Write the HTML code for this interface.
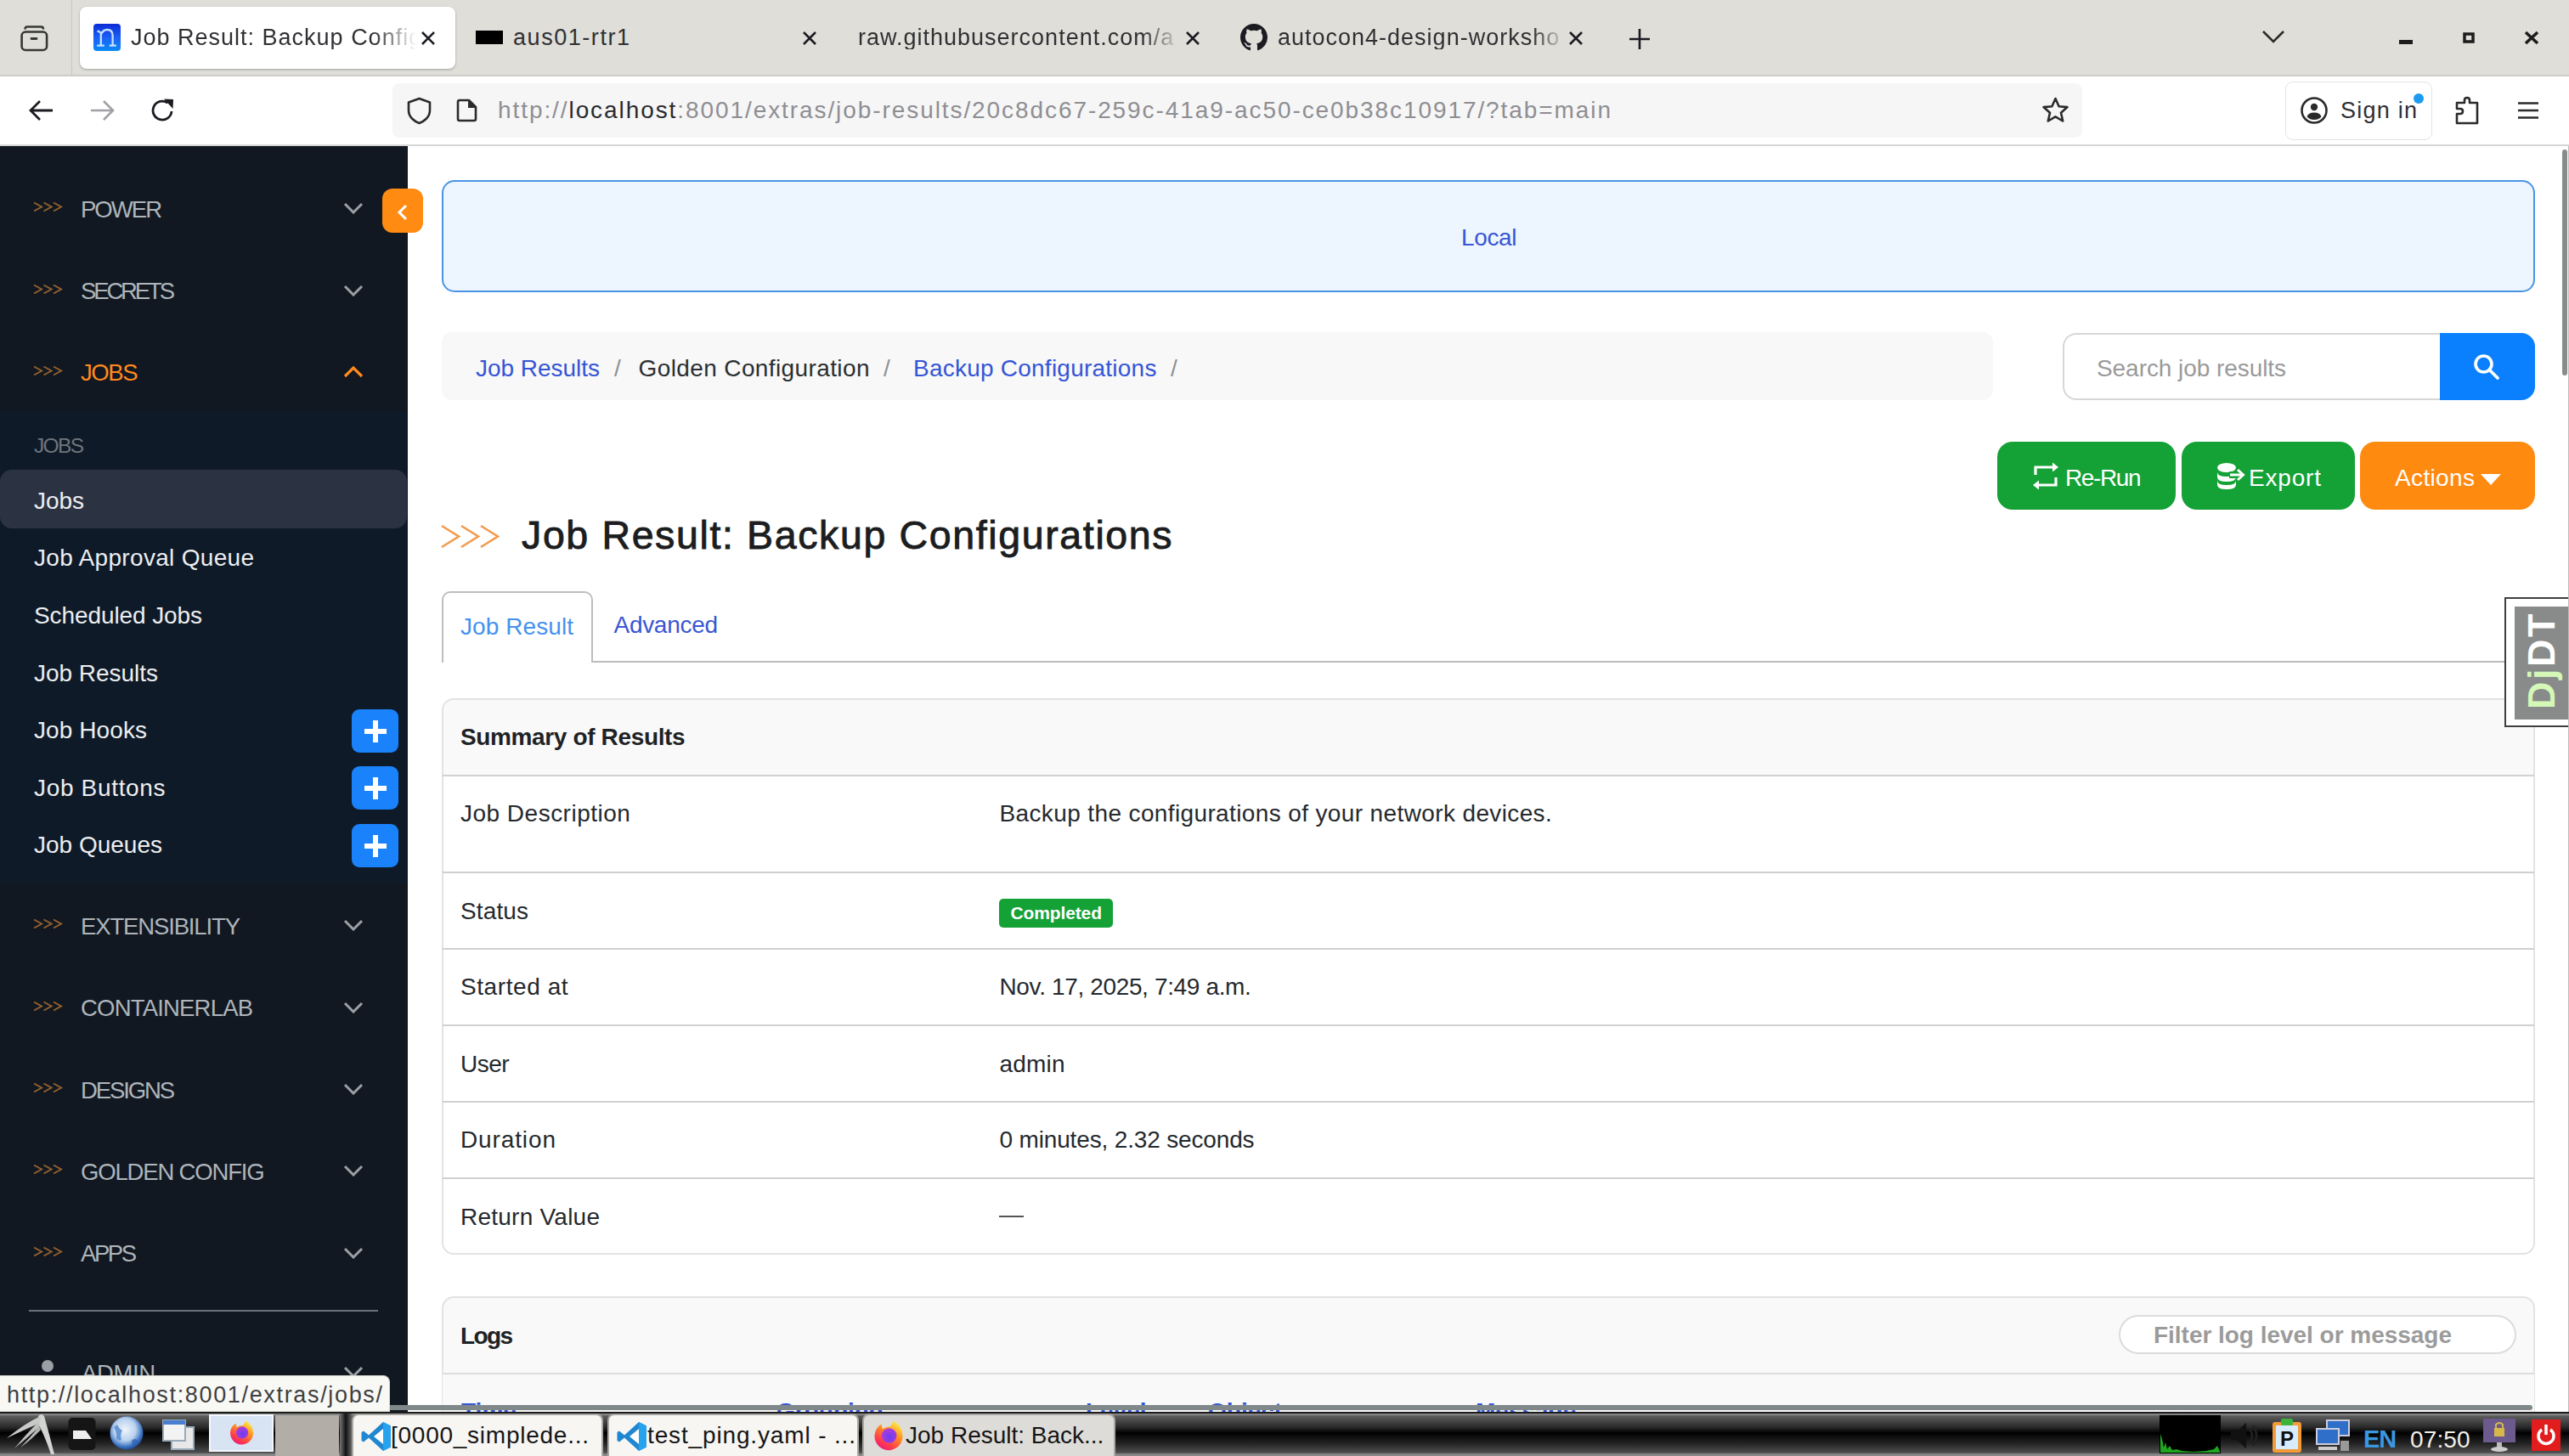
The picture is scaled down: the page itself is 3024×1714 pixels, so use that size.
<!DOCTYPE html><html><head><meta charset="utf-8"><style>
html,body{margin:0;padding:0;width:3024px;height:1714px;overflow:hidden;background:#fff;font-family:"Liberation Sans",sans-serif;}
.r{position:absolute;display:block;}
.t{position:absolute;line-height:1;white-space:nowrap;}
</style></head><body>
<div class="r" style="left:480px;top:172px;width:2544px;height:1490px;background:#fff;"></div>
<div class="r" style="left:520px;top:212px;width:2464px;height:132px;background:#edf5fe;border:2px solid #4a94e8;border-radius:15px;box-sizing:border-box;"></div>
<div class="t " style="left:1720px;top:266.30px;font-size:28px;color:#3a56d4;letter-spacing:-0.384px;">Local</div>
<div class="r" style="left:520px;top:391px;width:1826px;height:80px;background:#f7f8f7;border-radius:12px;"></div>
<div class="t " style="left:560px;top:420.30px;font-size:28px;color:#3555d6;letter-spacing:-0.030px;">Job Results</div>
<div class="t " style="left:723px;top:420.30px;font-size:28px;color:#8d9196;">/</div>
<div class="t " style="left:751.5px;top:420.30px;font-size:28px;color:#2b2f33;letter-spacing:0.388px;">Golden Configuration</div>
<div class="t " style="left:1040px;top:420.30px;font-size:28px;color:#8d9196;">/</div>
<div class="t " style="left:1075px;top:420.30px;font-size:28px;color:#3555d6;letter-spacing:0.233px;">Backup Configurations</div>
<div class="t " style="left:1378px;top:420.30px;font-size:28px;color:#8d9196;">/</div>
<div class="r" style="left:2428px;top:392px;width:456px;height:79px;background:#fff;border:2px solid #d7d7d7;border-right:none;border-radius:16px 0 0 16px;box-sizing:border-box;"></div>
<div class="t " style="left:2468px;top:420.30px;font-size:28px;color:#9a9a9a;letter-spacing:-0.065px;">Search job results</div>
<div class="r" style="left:2872px;top:392px;width:112px;height:79px;background:#0a80ff;border-radius:0 16px 16px 0;"></div>
<svg class="r" style="left:2910px;top:415px;" width="36" height="36" viewBox="0 0 36 36"><circle cx="13.5" cy="13.5" r="9.5" fill="none" stroke="#fff" stroke-width="3.6"/><path d="M20.5 20.5L30 30" stroke="#fff" stroke-width="3.8" stroke-linecap="round"/></svg>
<div class="r" style="left:2351px;top:520px;width:210px;height:80px;background:#14a135;border-radius:18px;"></div>
<svg class="r" style="left:2392px;top:544px;" width="32" height="33" viewBox="0 0 32 33"><path d="M4 15V6H25M28 18V27H7" fill="none" stroke="#fff" stroke-width="3.2"/><path d="M24 0.5L31 6L24 11.5Z" fill="#fff"/><path d="M8 21.5L1 27L8 32.5Z" fill="#fff"/></svg>
<div class="t " style="left:2431px;top:548.80px;font-size:28px;color:#fff;letter-spacing:-1.397px;">Re-Run</div>
<div class="r" style="left:2568px;top:520px;width:204px;height:80px;background:#14a135;border-radius:18px;"></div>
<svg class="r" style="left:2609px;top:544px;" width="36" height="33" viewBox="0 0 36 33"><ellipse cx="12" cy="6.5" rx="11" ry="5.5" fill="#fff"/><path d="M1 11.5Q1 17 12 17Q23 17 23 11.5V17.5Q23 23 12 23Q1 23 1 17.5Z" fill="#fff"/><path d="M1 21.5Q1 27 12 27Q23 27 23 21.5V26.5Q23 32 12 32Q1 32 1 26.5Z" fill="#fff"/><path d="M15 15H29" stroke="#14a135" stroke-width="8"/><path d="M24 7L33 15L24 23" fill="none" stroke="#14a135" stroke-width="6"/><path d="M16 15H30" stroke="#fff" stroke-width="3"/><path d="M25 9L31.5 15L25 21" fill="none" stroke="#fff" stroke-width="3"/></svg>
<div class="t " style="left:2647px;top:548.80px;font-size:28px;color:#fff;letter-spacing:0.812px;">Export</div>
<div class="r" style="left:2778px;top:520px;width:206px;height:80px;background:#ff8a10;border-radius:18px;"></div>
<div class="t " style="left:2819px;top:548.80px;font-size:28px;color:#fff;letter-spacing:0.362px;">Actions</div>
<svg class="r" style="left:2919px;top:556px;" width="26" height="16" viewBox="0 0 26 16"><path d="M1 2H25L13 15Z" fill="#fff"/></svg>
<svg class="r" style="left:518px;top:616px;" width="72" height="32" viewBox="0 0 72 32"><path d="M2 3L22 15.5L2 28M25 3L45 15.5L25 28M48 3L68 15.5L48 28" fill="none" stroke="#f39a4c" stroke-width="2.6"/></svg>
<div class="t " style="left:614px;top:607.14px;font-size:46.5px;color:#1b1d20;letter-spacing:1.631px;-webkit-text-stroke:0.9px #1b1d20;">Job Result: Backup Configurations</div>
<div class="r" style="left:520px;top:778px;width:2464px;height:2px;background:#bcbcbc;"></div>
<div class="r" style="left:520px;top:696px;width:178px;height:84px;background:#fff;border:2px solid #bdbdbd;border-bottom:none;border-radius:10px 10px 0 0;box-sizing:border-box;"></div>
<div class="t " style="left:542px;top:724.30px;font-size:28px;color:#4592ee;letter-spacing:0.078px;">Job Result</div>
<div class="t " style="left:722.5px;top:721.80px;font-size:28px;color:#3a56d4;letter-spacing:-0.292px;">Advanced</div>
<div class="r" style="left:520px;top:822px;width:2464px;height:655px;background:#fff;border:2px solid #e2e3e3;border-radius:14px;box-sizing:border-box;overflow:hidden;"><div style="position:absolute;left:0;top:0;right:0;height:90px;background:#f8f9f8"></div></div>
<div class="r" style="left:521px;top:912px;width:2462px;height:2px;background:#d0d1d2;"></div>
<div class="t " style="left:542px;top:854.30px;font-size:28px;color:#1f2225;font-weight:700;letter-spacing:-0.362px;">Summary of Results</div>
<div class="t " style="left:542px;top:943.80px;font-size:28px;color:#25292d;letter-spacing:0.487px;">Job Description</div>
<div class="r" style="left:521px;top:1026px;width:2462px;height:2px;background:#cfd0d1;"></div>
<div class="t " style="left:542px;top:1058.80px;font-size:28px;color:#25292d;letter-spacing:0.122px;">Status</div>
<div class="r" style="left:521px;top:1116px;width:2462px;height:2px;background:#cfd0d1;"></div>
<div class="t " style="left:542px;top:1147.80px;font-size:28px;color:#25292d;letter-spacing:0.577px;">Started at</div>
<div class="r" style="left:521px;top:1206px;width:2462px;height:2px;background:#cfd0d1;"></div>
<div class="t " style="left:542px;top:1238.80px;font-size:28px;color:#25292d;letter-spacing:-0.508px;">User</div>
<div class="r" style="left:521px;top:1296px;width:2462px;height:2px;background:#cfd0d1;"></div>
<div class="t " style="left:542px;top:1328.30px;font-size:28px;color:#25292d;letter-spacing:0.879px;">Duration</div>
<div class="r" style="left:521px;top:1386px;width:2462px;height:2px;background:#cfd0d1;"></div>
<div class="t " style="left:542px;top:1418.80px;font-size:28px;color:#25292d;letter-spacing:0.240px;">Return Value</div>
<div class="t " style="left:1176.5px;top:943.80px;font-size:28px;color:#25292d;letter-spacing:0.375px;">Backup the configurations of your network devices.</div>
<div class="r" style="left:1176px;top:1058px;width:134px;height:34px;background:#14a135;border-radius:5px;"></div>
<div class="t " style="left:1189.5px;top:1064.22px;font-size:21px;color:#fff;font-weight:700;letter-spacing:-0.127px;">Completed</div>
<div class="t " style="left:1176.5px;top:1147.80px;font-size:28px;color:#25292d;letter-spacing:-0.359px;">Nov. 17, 2025, 7:49 a.m.</div>
<div class="t " style="left:1176.5px;top:1238.80px;font-size:28px;color:#25292d;letter-spacing:0.209px;">admin</div>
<div class="t " style="left:1176.5px;top:1328.30px;font-size:28px;color:#25292d;letter-spacing:-0.155px;">0 minutes, 2.32 seconds</div>
<div class="r" style="left:1176px;top:1431px;width:29px;height:2px;background:#555;"></div>
<div class="r" style="left:520px;top:1526px;width:2464px;height:300px;background:#f8f9f8;border:2px solid #e2e3e3;border-radius:14px;box-sizing:border-box;"></div>
<div class="t " style="left:542px;top:1559.30px;font-size:28px;color:#1f2225;font-weight:700;letter-spacing:-1.630px;">Logs</div>
<div class="r" style="left:2494px;top:1548px;width:468px;height:46px;background:#fff;border:2px solid #dcdcdc;border-radius:23px;box-sizing:border-box;"></div>
<div class="t " style="left:2535px;top:1557.80px;font-size:28px;color:#9b9b9b;font-weight:700;letter-spacing:-0.027px;">Filter log level or message</div>
<div class="r" style="left:521px;top:1616px;width:2462px;height:2px;background:#dcdddd;"></div>
<div class="r" style="left:521px;top:1618px;width:2462px;height:50px;background:#f8f9f8;"></div>
<div class="t " style="left:543px;top:1648.30px;font-size:28px;color:#3555d6;font-weight:700;border-bottom:2px dotted #3555d6;">Time</div>
<div class="t " style="left:914px;top:1648.30px;font-size:28px;color:#3555d6;font-weight:700;border-bottom:2px dotted #3555d6;">Grouping</div>
<div class="t " style="left:1278px;top:1648.30px;font-size:28px;color:#3555d6;font-weight:700;border-bottom:2px dotted #3555d6;">Level</div>
<div class="t " style="left:1422px;top:1648.30px;font-size:28px;color:#3555d6;font-weight:700;border-bottom:2px dotted #3555d6;">Object</div>
<div class="t " style="left:1737px;top:1648.30px;font-size:28px;color:#3555d6;font-weight:700;border-bottom:2px dotted #3555d6;">Message</div>
<div class="r" style="left:2948px;top:703px;width:80px;height:153px;background:#fff;border:2px solid #3d3f40;box-sizing:border-box;"></div>
<div class="r" style="left:2960px;top:714px;width:70px;height:133px;background:#898b8a;"></div>
<div class="t" style="left:2968.5px;top:835px;transform-origin:0 0;transform:rotate(-90deg);font-size:45px;font-weight:700;line-height:1;color:#fff;letter-spacing:2.5px"><span style="color:#d5f7b8">Dj</span>DT</div>
<div class="r" style="left:0px;top:172px;width:480px;height:1490px;background:#111821;"></div>
<svg class="r" style="left:38.5px;top:237px;" width="40" height="15" viewBox="0 0 40 15"><path d="M1.0 1.5L10.0 6.5L1.0 11.5" fill="none" stroke="#93612f" stroke-width="2"/><path d="M12.5 1.5L21.5 6.5L12.5 11.5" fill="none" stroke="#93612f" stroke-width="2"/><path d="M24.0 1.5L33.0 6.5L24.0 11.5" fill="none" stroke="#93612f" stroke-width="2"/></svg>
<div class="t " style="left:95px;top:232.72px;font-size:27.5px;color:#aeb5bb;letter-spacing:-1.973px;">POWER</div>
<svg class="r" style="left:404px;top:238px;" width="24" height="14" viewBox="0 0 24 14"><path d="M2 2L12 12L22 2" fill="none" stroke="#9aa0a4" stroke-width="3"/></svg>
<svg class="r" style="left:38.5px;top:333.5px;" width="40" height="15" viewBox="0 0 40 15"><path d="M1.0 1.5L10.0 6.5L1.0 11.5" fill="none" stroke="#93612f" stroke-width="2"/><path d="M12.5 1.5L21.5 6.5L12.5 11.5" fill="none" stroke="#93612f" stroke-width="2"/><path d="M24.0 1.5L33.0 6.5L24.0 11.5" fill="none" stroke="#93612f" stroke-width="2"/></svg>
<div class="t " style="left:95px;top:329.22px;font-size:27.5px;color:#aeb5bb;letter-spacing:-3.148px;">SECRETS</div>
<svg class="r" style="left:404px;top:334.5px;" width="24" height="14" viewBox="0 0 24 14"><path d="M2 2L12 12L22 2" fill="none" stroke="#9aa0a4" stroke-width="3"/></svg>
<svg class="r" style="left:38.5px;top:429.5px;" width="40" height="15" viewBox="0 0 40 15"><path d="M1.0 1.5L10.0 6.5L1.0 11.5" fill="none" stroke="#93612f" stroke-width="2"/><path d="M12.5 1.5L21.5 6.5L12.5 11.5" fill="none" stroke="#93612f" stroke-width="2"/><path d="M24.0 1.5L33.0 6.5L24.0 11.5" fill="none" stroke="#93612f" stroke-width="2"/></svg>
<div class="t " style="left:95px;top:425.22px;font-size:27.5px;color:#ff8a1e;letter-spacing:-1.409px;">JOBS</div>
<svg class="r" style="left:404px;top:430.5px;" width="24" height="14" viewBox="0 0 24 14"><path d="M2 12L12 2L22 12" fill="none" stroke="#ff8a1e" stroke-width="3.2"/></svg>
<div class="r" style="left:0px;top:484px;width:480px;height:556px;background:#0f1a28;"></div>
<div class="t " style="left:40px;top:513.26px;font-size:24.5px;color:#6e757c;letter-spacing:-1.667px;">JOBS</div>
<div class="r" style="left:0px;top:553px;width:479px;height:69px;background:#2b3342;border-radius:14px;"></div>
<div class="t " style="left:40px;top:575.80px;font-size:28px;color:#eceef0;letter-spacing:-0.052px;">Jobs</div>
<div class="t " style="left:40px;top:643.40px;font-size:28px;color:#eceef0;letter-spacing:0.309px;">Job Approval Queue</div>
<div class="t " style="left:40px;top:711.00px;font-size:28px;color:#eceef0;letter-spacing:-0.097px;">Scheduled Jobs</div>
<div class="t " style="left:40px;top:778.60px;font-size:28px;color:#eceef0;letter-spacing:-0.030px;">Job Results</div>
<div class="t " style="left:40px;top:846.20px;font-size:28px;color:#eceef0;letter-spacing:0.088px;">Job Hooks</div>
<div class="r" style="left:414px;top:834.5px;width:55px;height:51px;background:#1a82fb;border-radius:9px;"></div>
<svg class="r" style="left:427px;top:845.5px;" width="30" height="30" viewBox="0 0 30 30"><path d="M15 2V28M2 15H28" stroke="#fff" stroke-width="6"/></svg>
<div class="t " style="left:40px;top:913.80px;font-size:28px;color:#eceef0;letter-spacing:0.672px;">Job Buttons</div>
<div class="r" style="left:414px;top:902.1px;width:55px;height:51px;background:#1a82fb;border-radius:9px;"></div>
<svg class="r" style="left:427px;top:913.1px;" width="30" height="30" viewBox="0 0 30 30"><path d="M15 2V28M2 15H28" stroke="#fff" stroke-width="6"/></svg>
<div class="t " style="left:40px;top:981.40px;font-size:28px;color:#eceef0;">Job Queues</div>
<div class="r" style="left:414px;top:969.7px;width:55px;height:51px;background:#1a82fb;border-radius:9px;"></div>
<svg class="r" style="left:427px;top:980.7px;" width="30" height="30" viewBox="0 0 30 30"><path d="M15 2V28M2 15H28" stroke="#fff" stroke-width="6"/></svg>
<svg class="r" style="left:38.5px;top:1081px;" width="40" height="15" viewBox="0 0 40 15"><path d="M1.0 1.5L10.0 6.5L1.0 11.5" fill="none" stroke="#93612f" stroke-width="2"/><path d="M12.5 1.5L21.5 6.5L12.5 11.5" fill="none" stroke="#93612f" stroke-width="2"/><path d="M24.0 1.5L33.0 6.5L24.0 11.5" fill="none" stroke="#93612f" stroke-width="2"/></svg>
<div class="t " style="left:95px;top:1076.72px;font-size:27.5px;color:#aeb5bb;letter-spacing:-1.145px;">EXTENSIBILITY</div>
<svg class="r" style="left:404px;top:1082px;" width="24" height="14" viewBox="0 0 24 14"><path d="M2 2L12 12L22 2" fill="none" stroke="#9aa0a4" stroke-width="3"/></svg>
<svg class="r" style="left:38.5px;top:1177.5px;" width="40" height="15" viewBox="0 0 40 15"><path d="M1.0 1.5L10.0 6.5L1.0 11.5" fill="none" stroke="#93612f" stroke-width="2"/><path d="M12.5 1.5L21.5 6.5L12.5 11.5" fill="none" stroke="#93612f" stroke-width="2"/><path d="M24.0 1.5L33.0 6.5L24.0 11.5" fill="none" stroke="#93612f" stroke-width="2"/></svg>
<div class="t " style="left:95px;top:1173.22px;font-size:27.5px;color:#aeb5bb;letter-spacing:-0.808px;">CONTAINERLAB</div>
<svg class="r" style="left:404px;top:1178.5px;" width="24" height="14" viewBox="0 0 24 14"><path d="M2 2L12 12L22 2" fill="none" stroke="#9aa0a4" stroke-width="3"/></svg>
<svg class="r" style="left:38.5px;top:1274px;" width="40" height="15" viewBox="0 0 40 15"><path d="M1.0 1.5L10.0 6.5L1.0 11.5" fill="none" stroke="#93612f" stroke-width="2"/><path d="M12.5 1.5L21.5 6.5L12.5 11.5" fill="none" stroke="#93612f" stroke-width="2"/><path d="M24.0 1.5L33.0 6.5L24.0 11.5" fill="none" stroke="#93612f" stroke-width="2"/></svg>
<div class="t " style="left:95px;top:1269.72px;font-size:27.5px;color:#aeb5bb;letter-spacing:-2.130px;">DESIGNS</div>
<svg class="r" style="left:404px;top:1275px;" width="24" height="14" viewBox="0 0 24 14"><path d="M2 2L12 12L22 2" fill="none" stroke="#9aa0a4" stroke-width="3"/></svg>
<svg class="r" style="left:38.5px;top:1370px;" width="40" height="15" viewBox="0 0 40 15"><path d="M1.0 1.5L10.0 6.5L1.0 11.5" fill="none" stroke="#93612f" stroke-width="2"/><path d="M12.5 1.5L21.5 6.5L12.5 11.5" fill="none" stroke="#93612f" stroke-width="2"/><path d="M24.0 1.5L33.0 6.5L24.0 11.5" fill="none" stroke="#93612f" stroke-width="2"/></svg>
<div class="t " style="left:95px;top:1365.72px;font-size:27.5px;color:#aeb5bb;letter-spacing:-1.168px;">GOLDEN CONFIG</div>
<svg class="r" style="left:404px;top:1371px;" width="24" height="14" viewBox="0 0 24 14"><path d="M2 2L12 12L22 2" fill="none" stroke="#9aa0a4" stroke-width="3"/></svg>
<svg class="r" style="left:38.5px;top:1466.5px;" width="40" height="15" viewBox="0 0 40 15"><path d="M1.0 1.5L10.0 6.5L1.0 11.5" fill="none" stroke="#93612f" stroke-width="2"/><path d="M12.5 1.5L21.5 6.5L12.5 11.5" fill="none" stroke="#93612f" stroke-width="2"/><path d="M24.0 1.5L33.0 6.5L24.0 11.5" fill="none" stroke="#93612f" stroke-width="2"/></svg>
<div class="t " style="left:95px;top:1462.22px;font-size:27.5px;color:#aeb5bb;letter-spacing:-2.458px;">APPS</div>
<svg class="r" style="left:404px;top:1467.5px;" width="24" height="14" viewBox="0 0 24 14"><path d="M2 2L12 12L22 2" fill="none" stroke="#9aa0a4" stroke-width="3"/></svg>
<div class="r" style="left:34px;top:1542px;width:411px;height:2px;background:#6c7279;"></div>
<div class="r" style="left:49px;top:1601px;width:14px;height:14px;background:#9aa0a5;border-radius:50%;"></div>
<div class="t " style="left:96px;top:1602.72px;font-size:27.5px;color:#aeb5bb;letter-spacing:-0.406px;">ADMIN</div>
<svg class="r" style="left:404px;top:1608px;" width="24" height="14" viewBox="0 0 24 14"><path d="M2 2L12 12L22 2" fill="none" stroke="#9aa0a4" stroke-width="3"/></svg>
<div class="r" style="left:450px;top:222px;width:48px;height:52px;background:#ff8b12;border-radius:12px;"></div>
<svg class="r" style="left:466px;top:240px;" width="16" height="20" viewBox="0 0 16 20"><path d="M12 2L4 10L12 18" fill="none" stroke="#fff" stroke-width="3"/></svg>
<div class="r" style="left:0px;top:0px;width:3024px;height:88px;background:#dfded8;"></div>
<div class="r" style="left:0px;top:88px;width:3024px;height:2px;background:#cdccc6;"></div>
<svg class="r" style="left:23px;top:28px;" width="34" height="34" viewBox="0 0 34 34"><rect x="2.6" y="9.5" width="29.5" height="21.5" rx="4.5" fill="none" stroke="#363835" stroke-width="2.6"/><path d="M6.5 6.5Q6.5 3.5 9 3.5H25.5Q28 3.5 28 6.5" fill="none" stroke="#363835" stroke-width="2.6"/><path d="M14 17.5H20" stroke="#363835" stroke-width="2.8" stroke-linecap="round"/></svg>
<div class="r" style="left:84px;top:0px;width:1px;height:88px;background:#c9c8c2;"></div>
<div class="r" style="left:94px;top:8px;width:442px;height:73px;background:#fff;border-radius:8px;box-shadow:0 1px 3px rgba(0,0,0,0.28);"></div>
<div class="r" style="left:110px;top:28px;width:32px;height:32px;background:linear-gradient(180deg,#0a2bd6,#1d5ff5 50%,#0a8af5);border-radius:4px;"></div>
<svg class="r" style="left:110px;top:28px;" width="32" height="32" viewBox="0 0 32 32"><path d="M4.5 8.2L8.8 10.5V25.3M4.2 25.6H12.8M8.8 12.5Q11.5 7 16 7Q22.6 7 22.6 14V25.3M18.8 25.6H26.8" fill="none" stroke="#c4e2ff" stroke-width="2.3"/></svg>
<div class="t " style="left:154px;top:31.14px;font-size:27px;color:#303034;letter-spacing:1.000px;width:336px;overflow:hidden;-webkit-mask-image:linear-gradient(90deg,#000 85%,transparent 100%);">Job Result: Backup Config</div>
<svg class="r" style="left:495px;top:36px;" width="18" height="18" viewBox="0 0 18 18"><path d="M2 2L16 16M16 2L2 16" stroke="#1c1b22" stroke-width="2.6"/></svg>
<div class="r" style="left:560px;top:36px;width:32px;height:16px;background:#000;"></div>
<div class="t " style="left:604px;top:31.14px;font-size:27px;color:#303034;letter-spacing:1.549px;">aus01-rtr1</div>
<svg class="r" style="left:944px;top:36px;" width="18" height="18" viewBox="0 0 18 18"><path d="M2 2L16 16M16 2L2 16" stroke="#1c1b22" stroke-width="2.6"/></svg>
<div class="t " style="left:1010px;top:31.14px;font-size:27px;color:#303034;letter-spacing:1.000px;width:380px;overflow:hidden;-webkit-mask-image:linear-gradient(90deg,#000 88%,transparent 100%);">raw.githubusercontent.com/a</div>
<svg class="r" style="left:1395px;top:36px;" width="18" height="18" viewBox="0 0 18 18"><path d="M2 2L16 16M16 2L2 16" stroke="#1c1b22" stroke-width="2.6"/></svg>
<svg class="r" style="left:1460px;top:28px;" width="32" height="32" viewBox="0 0 16 16"><path fill="#1c1b22" d="M8 0C3.58 0 0 3.58 0 8c0 3.54 2.29 6.53 5.47 7.59.4.07.55-.17.55-.38 0-.19-.01-.82-.01-1.49-2.01.37-2.53-.49-2.69-.94-.09-.23-.48-.94-.82-1.13-.28-.15-.68-.52-.01-.53.63-.01 1.08.58 1.23.82.72 1.21 1.87.87 2.33.66.07-.52.28-.87.51-1.07-1.78-.2-3.64-.89-3.64-3.95 0-.87.31-1.59.82-2.15-.08-.2-.36-1.02.08-2.12 0 0 .67-.21 2.2.82.64-.18 1.32-.27 2-.27.68 0 1.36.09 2 .27 1.53-1.04 2.2-.82 2.2-.82.44 1.1.16 1.92.08 2.12.51.56.82 1.27.82 2.15 0 3.07-1.87 3.75-3.65 3.95.29.25.54.73.54 1.48 0 1.07-.01 1.93-.01 2.2 0 .21.15.46.55.38A8.013 8.013 0 0016 8c0-4.42-3.58-8-8-8z"/></svg>
<div class="t " style="left:1504px;top:31.14px;font-size:27px;color:#303034;letter-spacing:1.000px;width:340px;overflow:hidden;-webkit-mask-image:linear-gradient(90deg,#000 88%,transparent 100%);">autocon4-design-worksho</div>
<svg class="r" style="left:1846px;top:36px;" width="18" height="18" viewBox="0 0 18 18"><path d="M2 2L16 16M16 2L2 16" stroke="#1c1b22" stroke-width="2.6"/></svg>
<svg class="r" style="left:1916px;top:32px;" width="28" height="28" viewBox="0 0 28 28"><path d="M14 2V26M2 14H26" stroke="#1c1b22" stroke-width="2.6"/></svg>
<svg class="r" style="left:2662px;top:35px;" width="28" height="17" viewBox="0 0 28 17"><path d="M2 2L14 14L26 2" fill="none" stroke="#2b2b2b" stroke-width="2.6"/></svg>
<div class="r" style="left:2824px;top:47px;width:16px;height:5px;background:#1c1c1c;"></div>
<svg class="r" style="left:2899px;top:38px;" width="14" height="13" viewBox="0 0 14 13"><rect x="2" y="2" width="10" height="9" fill="none" stroke="#1c1c1c" stroke-width="3.5"/></svg>
<svg class="r" style="left:2971px;top:36px;" width="18" height="17" viewBox="0 0 18 17"><path d="M2 2L16 15M16 2L2 15" stroke="#1c1c1c" stroke-width="3.6"/></svg>
<div class="r" style="left:0px;top:90px;width:3024px;height:80px;background:#fff;"></div>
<div class="r" style="left:0px;top:170px;width:3024px;height:2px;background:#d6d6d6;"></div>
<svg class="r" style="left:33px;top:117px;" width="31" height="26" viewBox="0 0 31 26"><path d="M29 13H4M14 2L3 13L14 24" fill="none" stroke="#1c1b22" stroke-width="2.8"/></svg>
<svg class="r" style="left:105px;top:117px;" width="31" height="26" viewBox="0 0 31 26"><path d="M2 13H27M17 2L28 13L17 24" fill="none" stroke="#a0a0a6" stroke-width="2.6"/></svg>
<svg class="r" style="left:176px;top:114px;" width="32" height="32" viewBox="0 0 32 32"><path d="M26 17A11 11 0 1 1 21.5 7.2" fill="none" stroke="#1c1b22" stroke-width="2.8"/><path d="M17 2.5L28 3L27.5 14Z" fill="#1c1b22"/></svg>
<div class="r" style="left:462px;top:98px;width:1989px;height:64px;background:#f6f6f6;border-radius:8px;"></div>
<svg class="r" style="left:478px;top:114px;" width="31" height="33" viewBox="0 0 31 33"><path d="M15.5 2L28 6.5V16C28 24 21 29 15.5 31C10 29 3 24 3 16V6.5Z" fill="none" stroke="#2b2b2b" stroke-width="2.6" stroke-linejoin="round"/></svg>
<svg class="r" style="left:536px;top:116px;" width="27" height="28" viewBox="0 0 27 28"><path d="M3 4Q3 2 5 2H16L24 10V24Q24 26 22 26H5Q3 26 3 24Z" fill="none" stroke="#2b2b2b" stroke-width="2.6" stroke-linejoin="round"/><path d="M16 2V10H24" fill="#2b2b2b" stroke="#2b2b2b" stroke-width="2"/></svg>
<div class="t " style="left:586px;top:116.30px;font-size:28px;color:#8e8e93;letter-spacing:1.920px;">http://<span style="color:#2a2a2e">localhost</span>:8001/extras/job-results/20c8dc67-259c-41a9-ac50-ce0b38c10917/?tab=main</div>
<svg class="r" style="left:2402px;top:113px;" width="35" height="34" viewBox="0 0 35 34"><path d="M17.5 3L21.6 12.2L31.5 13.1L24 19.7L26.2 29.5L17.5 24.4L8.8 29.5L11 19.7L3.5 13.1L13.4 12.2Z" fill="none" stroke="#2b2b2b" stroke-width="2.6" stroke-linejoin="round"/></svg>
<div class="r" style="left:2690px;top:96px;width:173px;height:69px;background:#fff;border:1px solid #e3e3e3;border-radius:9px;box-sizing:border-box;"></div>
<svg class="r" style="left:2707px;top:113px;" width="34" height="34" viewBox="0 0 34 34"><circle cx="17" cy="17" r="14.5" fill="none" stroke="#2b2b2b" stroke-width="2.6"/><circle cx="17" cy="13" r="4.2" fill="#2b2b2b"/><path d="M8.5 24.5Q10 19.5 17 19.5Q24 19.5 25.5 24.5Q22 28 17 28Q12 28 8.5 24.5Z" fill="#2b2b2b"/></svg>
<div class="t " style="left:2755px;top:117.14px;font-size:27px;color:#303034;letter-spacing:1.240px;">Sign in</div>
<div class="r" style="left:2841px;top:110px;width:12px;height:12px;background:#1d9bf0;border-radius:50%;"></div>
<svg class="r" style="left:2888px;top:112px;" width="34" height="36" viewBox="0 0 34 36"><path d="M4 33V22H8Q11 22 11 19Q11 16 8 16H4V9H13V6Q13 3 16 3Q19 3 19 6V9H28V33Z" fill="none" stroke="#2b2b2b" stroke-width="2.6" stroke-linejoin="round"/></svg>
<svg class="r" style="left:2963px;top:119px;" width="26" height="22" viewBox="0 0 26 22"><path d="M1 2.5H25M1 11H25M1 19.5H25" stroke="#2b2b2b" stroke-width="2.6"/></svg>
<div class="r" style="left:3023px;top:172px;width:1px;height:1490px;background:#bcbcbc;"></div>
<div class="r" style="left:3016px;top:176px;width:6px;height:266px;background:#878b8b;border-radius:3px;"></div>
<div class="r" style="left:0px;top:1654px;width:2981px;height:6px;background:#80888a;border-radius:3px;"></div>
<div class="r" style="left:0px;top:1619px;width:459px;height:43px;background:#f8f8f5;border:1px solid #d8d8d2;border-left:none;border-radius:0 8px 0 0;box-sizing:border-box;"></div>
<div class="t " style="left:8px;top:1629.14px;font-size:27px;color:#3f3f3f;letter-spacing:1.660px;">http://localhost:8001/extras/jobs/</div>
<div class="r" style="left:0px;top:1662px;width:3024px;height:52px;background:linear-gradient(180deg,#1c1c1c 0px,#1c1c1c 2px,#8c8c8c 2px,#7a7a7a 4px,#5c5c5c 5px,#2a2a2a 18px,#000 25px,#0a0a0a 28px,#262626 38px,#4e4e4e 48px,#8a8a8a 50px,#8a8a8a 52px);"></div>
<svg class="r" style="left:0px;top:1662px;" width="70" height="52" viewBox="0 0 70 52"><path d="M45 5Q49 1 52 5Q58 26 64 50L60 50Q53 29 45 14Z" fill="#d2d4d2"/><path d="M48 5Q30 13 8 31Q29 21 47 13Z" fill="#c8cac8"/><path d="M45 12Q31 26 17 43Q33 30 47 17Z" fill="#bfc1bf"/><path d="M46 17Q36 30 24 42Q38 32 48 21Z" fill="#b5b7b5"/></svg>
<svg class="r" style="left:80px;top:1668px;" width="33" height="40" viewBox="0 0 33 40"><rect x="0.5" y="1" width="32" height="38" rx="5" fill="#151515"/><path d="M6 16H21L28 26H6Z" fill="#efefef"/></svg>
<svg class="r" style="left:128px;top:1666px;" width="42" height="42" viewBox="0 0 42 42"><defs><radialGradient id="gl" cx="45%" cy="40%" r="60%"><stop offset="0" stop-color="#eef4fb"/><stop offset="0.55" stop-color="#b9d1ee"/><stop offset="0.85" stop-color="#3d74c2"/><stop offset="1" stop-color="#1f4f98"/></radialGradient></defs><circle cx="21" cy="21" r="19.5" fill="url(#gl)"/><path d="M6 14Q10 20 9 27Q12 31 15 29Q13 22 16 18Q12 16 10 11Z" fill="#4f86cf" opacity="0.8"/><path d="M27 30Q31 26 34 30Q33 35 28 37Z" fill="#2f64b2" opacity="0.8"/></svg>
<svg class="r" style="left:190px;top:1668px;" width="40" height="42" viewBox="0 0 40 42"><rect x="12" y="12" width="26" height="26" fill="#e8e8e8" stroke="#9ab" stroke-width="2"/><rect x="2" y="4" width="26" height="24" fill="#f3f3f3" stroke="#9ab" stroke-width="2"/><rect x="2" y="4" width="26" height="5" fill="#4a7fd0"/></svg>
<div class="r" style="left:246px;top:1665px;width:76px;height:44px;background:#d8e4f4;border:2px solid #f4f8fc;box-sizing:border-box;"></div>
<svg class="r" style="left:269px;top:1671px;" width="31" height="31" viewBox="0 0 31 31"><defs><linearGradient id="ffaa" x1="0.8" y1="0" x2="0.2" y2="1"><stop offset="0" stop-color="#fff44f"/><stop offset="0.35" stop-color="#ff9a1f"/><stop offset="0.75" stop-color="#ff3b4a"/><stop offset="1" stop-color="#e31587"/></linearGradient><radialGradient id="ffab" cx="0.55" cy="0.6" r="0.6"><stop offset="0" stop-color="#6a3df0"/><stop offset="1" stop-color="#b23bd8"/></radialGradient></defs><path d="M20 1.5Q29 6 29 16.5A13.5 13.5 0 1 1 4 9Q6 5.5 9 4.5Q8.5 7.5 10 9Q13 6.5 17 7Q19 4.5 20 1.5Z" fill="url(#ffaa)"/><circle cx="16" cy="15.5" r="7.2" fill="url(#ffab)"/></svg>
<div class="r" style="left:324px;top:1666px;width:75px;height:48px;background:#b3ada8;"></div>
<div class="r" style="left:400px;top:1664px;width:14px;height:50px;background:linear-gradient(90deg,#777,#111 50%,#666);"></div>
<div class="r" style="left:414px;top:1664px;width:296px;height:50px;background:#f7f6f3;border:2px solid #a9a7a3;border-bottom:none;border-radius:8px 8px 0 0;box-sizing:border-box;"></div>
<svg class="r" style="left:424px;top:1672px;" width="38" height="38" viewBox="0 0 38 38"><path d="M27 2L36 6.5V31.5L27 36L10 20.5L4 25.5L1.5 24V14L4 12.5L10 17.5Z" fill="#1f86d2"/><path d="M27 10L16 19L27 28Z" fill="#fff"/><path d="M27 2L36 6.5V31.5L27 36Z" fill="#27a3ee"/></svg>
<div class="r" style="left:715px;top:1664px;width:296px;height:50px;background:#f7f6f3;border:2px solid #a9a7a3;border-bottom:none;border-radius:8px 8px 0 0;box-sizing:border-box;"></div>
<svg class="r" style="left:725px;top:1672px;" width="38" height="38" viewBox="0 0 38 38"><path d="M27 2L36 6.5V31.5L27 36L10 20.5L4 25.5L1.5 24V14L4 12.5L10 17.5Z" fill="#1f86d2"/><path d="M27 10L16 19L27 28Z" fill="#fff"/><path d="M27 2L36 6.5V31.5L27 36Z" fill="#27a3ee"/></svg>
<div class="r" style="left:1015px;top:1664px;width:298px;height:50px;background:#dedcd8;border:2px solid #a9a7a3;border-bottom:none;border-radius:8px 8px 0 0;box-sizing:border-box;"></div>
<svg class="r" style="left:1027px;top:1671px;" width="38" height="38" viewBox="0 0 31 31"><defs><linearGradient id="ffba" x1="0.8" y1="0" x2="0.2" y2="1"><stop offset="0" stop-color="#fff44f"/><stop offset="0.35" stop-color="#ff9a1f"/><stop offset="0.75" stop-color="#ff3b4a"/><stop offset="1" stop-color="#e31587"/></linearGradient><radialGradient id="ffbb" cx="0.55" cy="0.6" r="0.6"><stop offset="0" stop-color="#6a3df0"/><stop offset="1" stop-color="#b23bd8"/></radialGradient></defs><path d="M20 1.5Q29 6 29 16.5A13.5 13.5 0 1 1 4 9Q6 5.5 9 4.5Q8.5 7.5 10 9Q13 6.5 17 7Q19 4.5 20 1.5Z" fill="url(#ffba)"/><circle cx="16" cy="15.5" r="7.2" fill="url(#ffbb)"/></svg>
<div class="t " style="left:460px;top:1676.30px;font-size:28px;color:#151515;letter-spacing:0.747px;">[0000_simplede...</div>
<div class="t " style="left:762px;top:1676.30px;font-size:28px;color:#151515;letter-spacing:0.854px;">test_ping.yaml - ...</div>
<div class="t " style="left:1066px;top:1676.30px;font-size:28px;color:#151515;letter-spacing:-0.002px;">Job Result: Back...</div>
<div class="r" style="left:2542px;top:1666px;width:72px;height:45px;background:#000;"></div>
<svg class="r" style="left:2542px;top:1666px;" width="72" height="45" viewBox="0 0 72 45"><path d="M1 44V22L3 28L5 38L7 32L9 40L12 36L15 41L20 40L26 42L40 43L55 42L64 40L68 36L71 42V44Z" fill="#1fa61f"/></svg>
<svg class="r" style="left:2622px;top:1672px;" width="38" height="36" viewBox="0 0 38 36"><path d="M4 13H11L22 3V33L11 23H4Z" fill="#111"/><path d="M26 10Q32 18 26 26M30 6Q38 18 30 30" fill="none" stroke="#222" stroke-width="2.5"/></svg>
<svg class="r" style="left:2673px;top:1668px;" width="38" height="44" viewBox="0 0 38 44"><rect x="2" y="6" width="34" height="36" rx="3" fill="#f29b38"/><rect x="6" y="10" width="26" height="28" fill="#d8ecfb"/><rect x="12" y="2" width="14" height="8" rx="2" fill="#3cb33c"/><text x="19" y="34" font-family="Liberation Sans" font-weight="700" font-size="24" text-anchor="middle" fill="#111">P</text></svg>
<svg class="r" style="left:2725px;top:1670px;" width="42" height="40" viewBox="0 0 42 40"><rect x="14" y="2" width="26" height="18" fill="#2f6fc9" stroke="#ccd" stroke-width="2"/><rect x="2" y="12" width="26" height="18" fill="#2f6fc9" stroke="#ccd" stroke-width="2"/><rect x="4" y="33" width="22" height="4" fill="#ccc"/><rect x="30" y="26" width="10" height="12" fill="#999"/></svg>
<div class="t " style="left:2782px;top:1680.45px;font-size:29px;color:#3a98e0;font-weight:700;letter-spacing:-1.000px;">EN</div>
<div class="t " style="left:2837px;top:1681.30px;font-size:28px;color:#f1eee4;letter-spacing:0.130px;">07:50</div>
<svg class="r" style="left:2922px;top:1668px;" width="40" height="42" viewBox="0 0 40 42"><rect x="1" y="2" width="38" height="28" fill="#6c5a8e"/><rect x="14" y="13" width="12" height="10" fill="#d6b84a"/><path d="M16 13V9Q20 5 24 9V13" fill="none" stroke="#d6b84a" stroke-width="2"/><rect x="17" y="30" width="6" height="6" fill="#bbb"/><ellipse cx="20" cy="38" rx="10" ry="3" fill="#ccc"/></svg>
<div class="r" style="left:2980px;top:1671px;width:34px;height:37px;background:#e11d1d;"></div>
<svg class="r" style="left:2984px;top:1674px;" width="26" height="30" viewBox="0 0 26 30"><path d="M8 9A9 9 0 1 0 18 9" fill="none" stroke="#fff" stroke-width="3.5"/><path d="M13 3V15" stroke="#fff" stroke-width="3.5"/></svg>
</body></html>
